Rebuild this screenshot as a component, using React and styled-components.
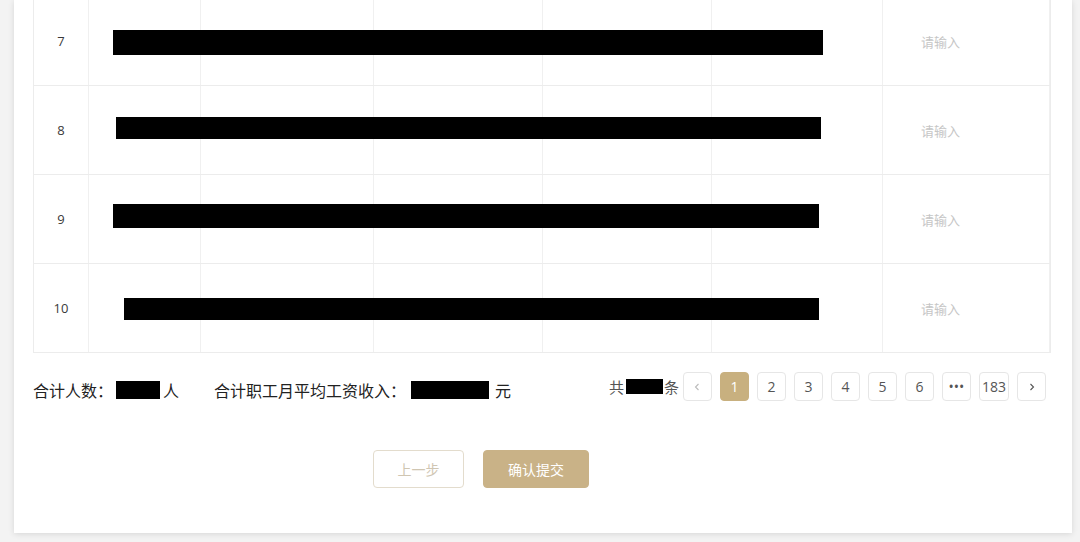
import React from "react";
import styled, { createGlobalStyle } from "styled-components";

const GlobalStyle = createGlobalStyle`
  html, body {
    margin: 0;
    padding: 0;
    background: #f3f3f3;
    font-family: "Open Sans", "Noto Sans CJK SC", sans-serif;
    overflow: hidden;
  }
`;

const Page = styled.div`
  width: 1080px;
  height: 542px;
  padding: 0 8px 0 14px;
  box-sizing: border-box;
`;

const Card = styled.div`
  background: #fff;
  width: 1058px;
  height: 533px;
  box-sizing: border-box;
  padding: 0 21px 0 19px;
  box-shadow: 0 1px 6px rgba(0, 0, 0, 0.12);
  overflow: hidden;
`;

const Table = styled.div`
  margin-top: -4px;
  border-left: 1px solid #ececec;
  border-right: 1px solid #ececec;
  border-bottom: 1px solid #ececec;
`;

const Row = styled.div`
  position: relative;
  display: grid;
  grid-template-columns: 55px 112px 173px 169px 169px 171px 1fr;
  height: 89px;
  border-top: 1px solid #ececec;
  box-sizing: border-box;
`;

const Cell = styled.div`
  border-right: 1px solid #f0f0f0;
  display: flex;
  align-items: center;
  justify-content: ${({ center }) => (center ? "center" : "flex-start")};
  padding-left: ${({ pad }) => pad || 0}px;
  font-size: 13px;
  color: ${({ muted }) => (muted ? "#c6c6c6" : "#3a3a3a")};
  font-family: "Open Sans", "Noto Sans CJK SC", sans-serif;
  &:last-child {
    border-right: none;
  }
`;

const Redact = styled.div`
  position: absolute;
  background: #000;
`;

const Footer = styled.div`
  display: flex;
  justify-content: space-between;
  align-items: flex-start;
  margin-top: 19px;
  padding-right: 5px;
`;

const Summary = styled.div`
  display: flex;
  align-items: center;
  padding-top: 6px;
  font-size: 16px;
  color: #222;
  font-family: "Noto Sans CJK SC", sans-serif;
`;

const SumItem = styled.span`
  display: flex;
  align-items: center;
  margin-right: ${({ gap }) => gap || 0}px;
`;

const Inline = styled.span`
  display: inline-block;
  background: #000;
  width: ${({ w }) => w}px;
  height: ${({ h }) => h || 18}px;
  margin: 0 ${({ mr }) => mr || 0}px 0 ${({ ml }) => ml || 0}px;
`;

const Pager = styled.div`
  display: flex;
  align-items: center;
  gap: 8px;
`;

const Total = styled.div`
  display: flex;
  align-items: center;
  font-size: 15px;
  color: #555;
  font-family: "Noto Sans CJK SC", sans-serif;
  margin-right: -4px;
`;

const PageBtn = styled.div`
  min-width: 29px;
  height: 29px;
  box-sizing: border-box;
  padding: 0 2px;
  display: flex;
  align-items: center;
  justify-content: center;
  border-radius: 4px;
  font-size: 14px;
  border: 1px solid ${({ active }) => (active ? "#c8b07f" : "#e6e6e6")};
  background: ${({ active }) => (active ? "#c8b07f" : "#fff")};
  color: ${({ active, dim }) => (active ? "#fff" : dim ? "#bbb" : "#555")};
  font-family: "Open Sans", sans-serif;
`;

const Actions = styled.div`
  display: flex;
  gap: 19px;
  margin-top: 48px;
  margin-left: 340px;
`;

const Button = styled.button`
  height: 38px;
  width: ${({ w }) => w}px;
  border-radius: 4px;
  font-size: 14px;
  font-family: "Noto Sans CJK SC", sans-serif;
  border: 1px solid ${({ primary }) => (primary ? "#c9b287" : "#e3dccd")};
  background: ${({ primary }) => (primary ? "#c9b287" : "#fff")};
  color: ${({ primary }) => (primary ? "#fff" : "#d0c6b2")};
`;

const rows = [
  { n: 7, bar: { left: 79, top: 33, width: 710, height: 25 } },
  { n: 8, bar: { left: 82, top: 31, width: 705, height: 22 } },
  { n: 9, bar: { left: 79, top: 29, width: 706, height: 24 } },
  { n: 10, bar: { left: 90, top: 34, width: 695, height: 22 } },
];

const Chevron = ({ dir }) => (
  <svg width="10" height="10" viewBox="0 0 10 10" fill="none" stroke="currentColor" strokeWidth="1.1">
    {dir === "left" ? <path d="M6.5 2 L3.5 5 L6.5 8" /> : <path d="M3.5 2 L6.5 5 L3.5 8" />}
  </svg>
);

export default function App() {
  return (
    <Page>
      <GlobalStyle />
      <Card>
        <Table>
          {rows.map((r) => (
            <Row key={r.n}>
              <Cell center>{r.n}</Cell>
              <Cell />
              <Cell />
              <Cell />
              <Cell />
              <Cell />
              <Cell muted pad={38}>请输入</Cell>
              <Redact style={r.bar} />
            </Row>
          ))}
        </Table>
        <Footer>
          <Summary>
            <SumItem gap={35}>
              合计人数：
              <Inline w={44} ml={3} mr={3} />人
            </SumItem>
            <SumItem>
              合计职工月平均工资收入：
              <Inline w={78} ml={5} mr={6} />元
            </SumItem>
          </Summary>
          <Pager>
            <Total>
              共<Inline w={37} h={15} ml={2} mr={1} />条
            </Total>
            <PageBtn dim>
              <Chevron dir="left" />
            </PageBtn>
            <PageBtn active>1</PageBtn>
            <PageBtn>2</PageBtn>
            <PageBtn>3</PageBtn>
            <PageBtn>4</PageBtn>
            <PageBtn>5</PageBtn>
            <PageBtn>6</PageBtn>
            <PageBtn>•••</PageBtn>
            <PageBtn>183</PageBtn>
            <PageBtn>
              <Chevron dir="right" />
            </PageBtn>
          </Pager>
        </Footer>
        <Actions>
          <Button w={91}>上一步</Button>
          <Button primary w={106}>确认提交</Button>
        </Actions>
      </Card>
    </Page>
  );
}
